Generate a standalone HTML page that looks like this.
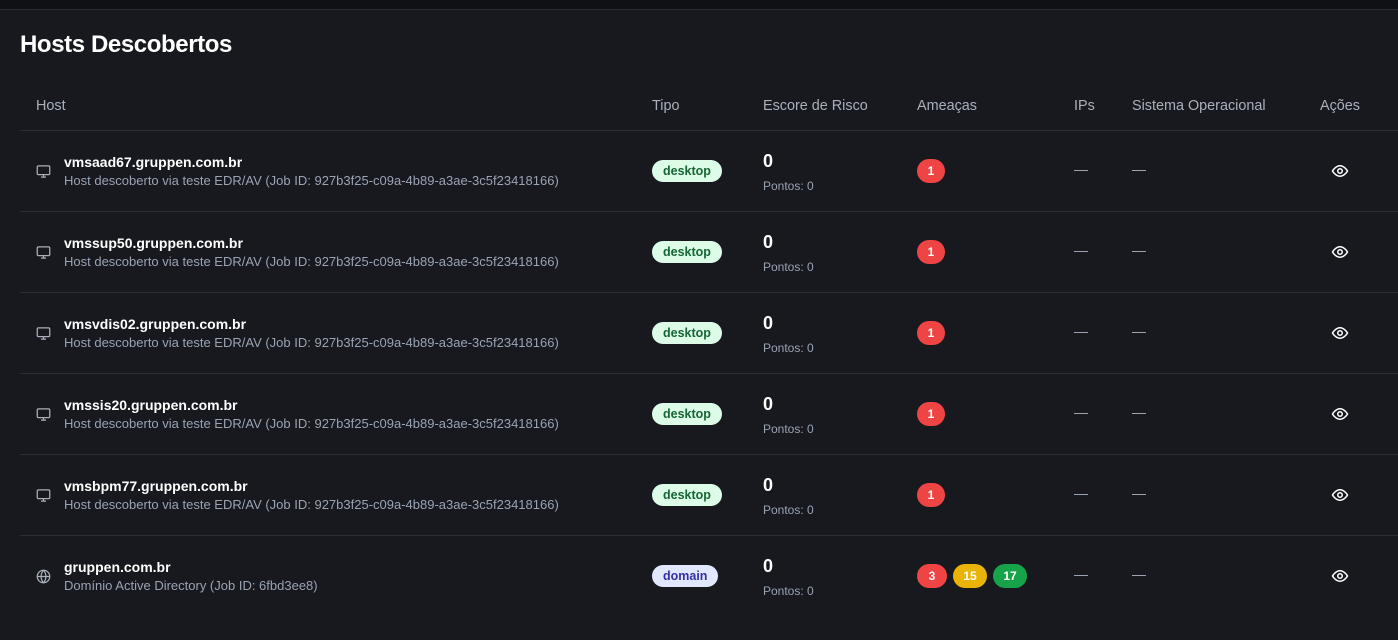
<!DOCTYPE html>
<html><head><meta charset="utf-8"><style>
body{margin:0;width:1398px;height:640px;background:#17191f;font-family:"Liberation Sans",sans-serif;color:#fff;overflow:hidden;position:relative}
.top{position:absolute;left:0;top:0;width:1398px;height:9px;background:#0f1115;border-bottom:1px solid #2a2d34}
h1{position:absolute;left:20px;top:31px;margin:0;font-size:24px;font-weight:bold;letter-spacing:-0.4px}
.th{position:absolute;top:98px;font-size:14.4px;color:#aab0bb}
.line{position:absolute;left:20px;width:1378px;height:1px;background:#2b2e35}
.row{position:absolute;left:0;width:1398px;height:81px}
.ic{position:absolute;left:36px;top:33px}
.name{position:absolute;left:64px;top:23px;font-size:14px;font-weight:bold}
.sub{position:absolute;left:64px;top:42px;font-size:13px;color:#9aa3b2}
.pill{position:absolute;left:652px;top:29px;height:22px;line-height:22px;padding:0 11px;border-radius:11px;font-size:12.5px;font-weight:bold}
.d{background:#dcfce7;color:#166534}
.m{background:#e0e7ff;color:#3730a3}
.sc{position:absolute;left:763px;top:20px;font-size:18px;font-weight:bold}
.pt{position:absolute;left:763px;top:48px;font-size:12px;color:#9aa3b2}
.b{position:absolute;top:28px;height:24px;line-height:24px;border-radius:12px;font-size:12px;font-weight:bold;text-align:center}
.dash{position:absolute;top:39px;width:14px;height:1px;background:#9aa3b2}
.eye{position:absolute;left:1331px;top:31px}
</style></head><body>
<div class="top"></div>
<h1>Hosts Descobertos</h1>
<div class="th" style="left:36px">Host</div>
<div class="th" style="left:652px">Tipo</div>
<div class="th" style="left:763px">Escore de Risco</div>
<div class="th" style="left:917px">Ameaças</div>
<div class="th" style="left:1074px">IPs</div>
<div class="th" style="left:1132px">Sistema Operacional</div>
<div class="th" style="left:1320px">Ações</div>
<div class="line" style="top:130px"></div>

<div class="row" style="top:131px">
<svg class="ic" width="15" height="15" viewBox="0 0 24 24" fill="none" stroke="#aab0bb" stroke-width="2"><rect x="2" y="3" width="20" height="14" rx="2"/><path d="M8 21h8M12 17v4"/></svg>
<div class="name">vmsaad67.gruppen.com.br</div><div class="sub">Host descoberto via teste EDR/AV (Job ID: 927b3f25-c09a-4b89-a3ae-3c5f23418166)</div>
<div class="pill d">desktop</div><div class="sc">0</div><div class="pt">Pontos: 0</div>
<div class="b" style="left:917px;width:28px;background:#ef4444">1</div>
<div class="dash" style="left:1074px"></div><div class="dash" style="left:1132px"></div>
<svg class="eye" width="18" height="18" viewBox="0 0 24 24" fill="none" stroke="#fff" stroke-width="2"><path d="M2 12s4-7 10-7 10 7 10 7-4 7-10 7S2 12 2 12z"/><circle cx="12" cy="12" r="3"/></svg>
</div>
<div class="line" style="top:211px"></div>

<div class="row" style="top:212px">
<svg class="ic" width="15" height="15" viewBox="0 0 24 24" fill="none" stroke="#aab0bb" stroke-width="2"><rect x="2" y="3" width="20" height="14" rx="2"/><path d="M8 21h8M12 17v4"/></svg>
<div class="name">vmssup50.gruppen.com.br</div><div class="sub">Host descoberto via teste EDR/AV (Job ID: 927b3f25-c09a-4b89-a3ae-3c5f23418166)</div>
<div class="pill d">desktop</div><div class="sc">0</div><div class="pt">Pontos: 0</div>
<div class="b" style="left:917px;width:28px;background:#ef4444">1</div>
<div class="dash" style="left:1074px"></div><div class="dash" style="left:1132px"></div>
<svg class="eye" width="18" height="18" viewBox="0 0 24 24" fill="none" stroke="#fff" stroke-width="2"><path d="M2 12s4-7 10-7 10 7 10 7-4 7-10 7S2 12 2 12z"/><circle cx="12" cy="12" r="3"/></svg>
</div>
<div class="line" style="top:292px"></div>

<div class="row" style="top:293px">
<svg class="ic" width="15" height="15" viewBox="0 0 24 24" fill="none" stroke="#aab0bb" stroke-width="2"><rect x="2" y="3" width="20" height="14" rx="2"/><path d="M8 21h8M12 17v4"/></svg>
<div class="name">vmsvdis02.gruppen.com.br</div><div class="sub">Host descoberto via teste EDR/AV (Job ID: 927b3f25-c09a-4b89-a3ae-3c5f23418166)</div>
<div class="pill d">desktop</div><div class="sc">0</div><div class="pt">Pontos: 0</div>
<div class="b" style="left:917px;width:28px;background:#ef4444">1</div>
<div class="dash" style="left:1074px"></div><div class="dash" style="left:1132px"></div>
<svg class="eye" width="18" height="18" viewBox="0 0 24 24" fill="none" stroke="#fff" stroke-width="2"><path d="M2 12s4-7 10-7 10 7 10 7-4 7-10 7S2 12 2 12z"/><circle cx="12" cy="12" r="3"/></svg>
</div>
<div class="line" style="top:373px"></div>

<div class="row" style="top:374px">
<svg class="ic" width="15" height="15" viewBox="0 0 24 24" fill="none" stroke="#aab0bb" stroke-width="2"><rect x="2" y="3" width="20" height="14" rx="2"/><path d="M8 21h8M12 17v4"/></svg>
<div class="name">vmssis20.gruppen.com.br</div><div class="sub">Host descoberto via teste EDR/AV (Job ID: 927b3f25-c09a-4b89-a3ae-3c5f23418166)</div>
<div class="pill d">desktop</div><div class="sc">0</div><div class="pt">Pontos: 0</div>
<div class="b" style="left:917px;width:28px;background:#ef4444">1</div>
<div class="dash" style="left:1074px"></div><div class="dash" style="left:1132px"></div>
<svg class="eye" width="18" height="18" viewBox="0 0 24 24" fill="none" stroke="#fff" stroke-width="2"><path d="M2 12s4-7 10-7 10 7 10 7-4 7-10 7S2 12 2 12z"/><circle cx="12" cy="12" r="3"/></svg>
</div>
<div class="line" style="top:454px"></div>

<div class="row" style="top:455px">
<svg class="ic" width="15" height="15" viewBox="0 0 24 24" fill="none" stroke="#aab0bb" stroke-width="2"><rect x="2" y="3" width="20" height="14" rx="2"/><path d="M8 21h8M12 17v4"/></svg>
<div class="name">vmsbpm77.gruppen.com.br</div><div class="sub">Host descoberto via teste EDR/AV (Job ID: 927b3f25-c09a-4b89-a3ae-3c5f23418166)</div>
<div class="pill d">desktop</div><div class="sc">0</div><div class="pt">Pontos: 0</div>
<div class="b" style="left:917px;width:28px;background:#ef4444">1</div>
<div class="dash" style="left:1074px"></div><div class="dash" style="left:1132px"></div>
<svg class="eye" width="18" height="18" viewBox="0 0 24 24" fill="none" stroke="#fff" stroke-width="2"><path d="M2 12s4-7 10-7 10 7 10 7-4 7-10 7S2 12 2 12z"/><circle cx="12" cy="12" r="3"/></svg>
</div>
<div class="line" style="top:535px"></div>

<div class="row" style="top:536px">
<svg class="ic" width="15" height="15" viewBox="0 0 24 24" fill="none" stroke="#aab0bb" stroke-width="2"><circle cx="12" cy="12" r="10"/><path d="M2 12h20M12 2a15 15 0 0 1 0 20M12 2a15 15 0 0 0 0 20"/></svg>
<div class="name">gruppen.com.br</div><div class="sub">Domínio Active Directory (Job ID: 6fbd3ee8)</div>
<div class="pill m">domain</div><div class="sc">0</div><div class="pt">Pontos: 0</div>
<div class="b" style="left:917px;width:30px;background:#ef4444">3</div>
<div class="b" style="left:953px;width:34px;background:#eab308">15</div>
<div class="b" style="left:993px;width:34px;background:#16a34a">17</div>
<div class="dash" style="left:1074px"></div><div class="dash" style="left:1132px"></div>
<svg class="eye" width="18" height="18" viewBox="0 0 24 24" fill="none" stroke="#fff" stroke-width="2"><path d="M2 12s4-7 10-7 10 7 10 7-4 7-10 7S2 12 2 12z"/><circle cx="12" cy="12" r="3"/></svg>
</div>
</body></html>
